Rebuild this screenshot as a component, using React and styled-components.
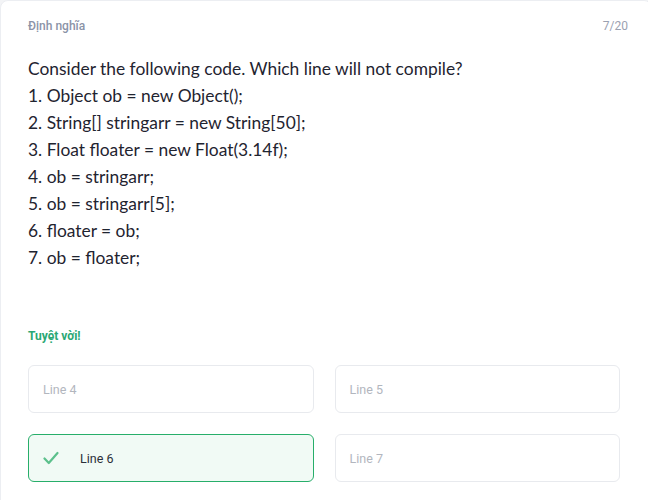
import React from "react";
import styled, { createGlobalStyle } from "styled-components";

const Global = createGlobalStyle`
  body {
    margin: 0;
    background: #f3f4f6;
    overflow: hidden;
    font-family: Roboto, "Noto Sans", sans-serif;
  }
`;

const Card = styled.div`
  width: 652px;
  min-height: 520px;
  box-sizing: border-box;
  background: #ffffff;
  border: 1px solid #eceef2;
  border-radius: 8px;
  padding: 16px 31px 0 27px;
`;

const Header = styled.div`
  display: flex;
  justify-content: space-between;
  align-items: center;
  height: 18px;
  margin-right: -8px;
`;

const Category = styled.span`
  font-size: 12px;
  font-weight: 500;
  color: #8b93a7;
`;

const Counter = styled.span`
  font-size: 12px;
  color: #9aa1b1;
`;

const Question = styled.div`
  margin-top: 20px;
  font-family: Lato, "Open Sans", sans-serif;
  font-size: 17.4px;
  line-height: 27px;
  color: #1f2430;
`;

const Feedback = styled.div`
  margin-top: 58px;
  font-size: 12px;
  font-weight: 700;
  color: #2aa874;
`;

const Options = styled.div`
  margin-top: 22px;
  display: grid;
  grid-template-columns: 1fr 1fr;
  gap: 21px 21px;
`;

const Option = styled.div`
  height: 48px;
  box-sizing: border-box;
  display: flex;
  align-items: center;
  gap: 21px;
  padding: 0 14px;
  border-radius: 6px;
  border: 1px solid ${(p) => (p.$correct ? "#27ae6a" : "#e8eaee")};
  background: ${(p) => (p.$correct ? "#f1faf5" : "#ffffff")};
  font-size: 12.5px;
  color: ${(p) => (p.$correct ? "#2b2f3a" : "#b2b6be")};
`;

const Check = () => (
  <svg width="16" height="14" viewBox="0 0 16 14" fill="none">
    <path d="M1.5 7.5 L5.8 12 L14.5 2" stroke="#5cc08c" strokeWidth="2.2" strokeLinecap="round" strokeLinejoin="round" />
  </svg>
);

const lines = [
  "Consider the following code. Which line will not compile?",
  "1. Object ob = new Object();",
  "2. String[] stringarr = new String[50];",
  "3. Float floater = new Float(3.14f);",
  "4. ob = stringarr;",
  "5. ob = stringarr[5];",
  "6. floater = ob;",
  "7. ob = floater;",
];

const answers = [
  { label: "Line 4" },
  { label: "Line 5" },
  { label: "Line 6", correct: true },
  { label: "Line 7" },
];

export default function App() {
  return (
    <>
      <Global />
      <Card>
        <Header>
          <Category>Định nghĩa</Category>
          <Counter>7/20</Counter>
        </Header>
        <Question>
          {lines.map((l) => (
            <div key={l}>{l}</div>
          ))}
        </Question>
        <Feedback>Tuyệt vời!</Feedback>
        <Options>
          {answers.map((a) => (
            <Option key={a.label} $correct={a.correct}>
              {a.correct && <Check />}
              {a.label}
            </Option>
          ))}
        </Options>
      </Card>
    </>
  );
}
